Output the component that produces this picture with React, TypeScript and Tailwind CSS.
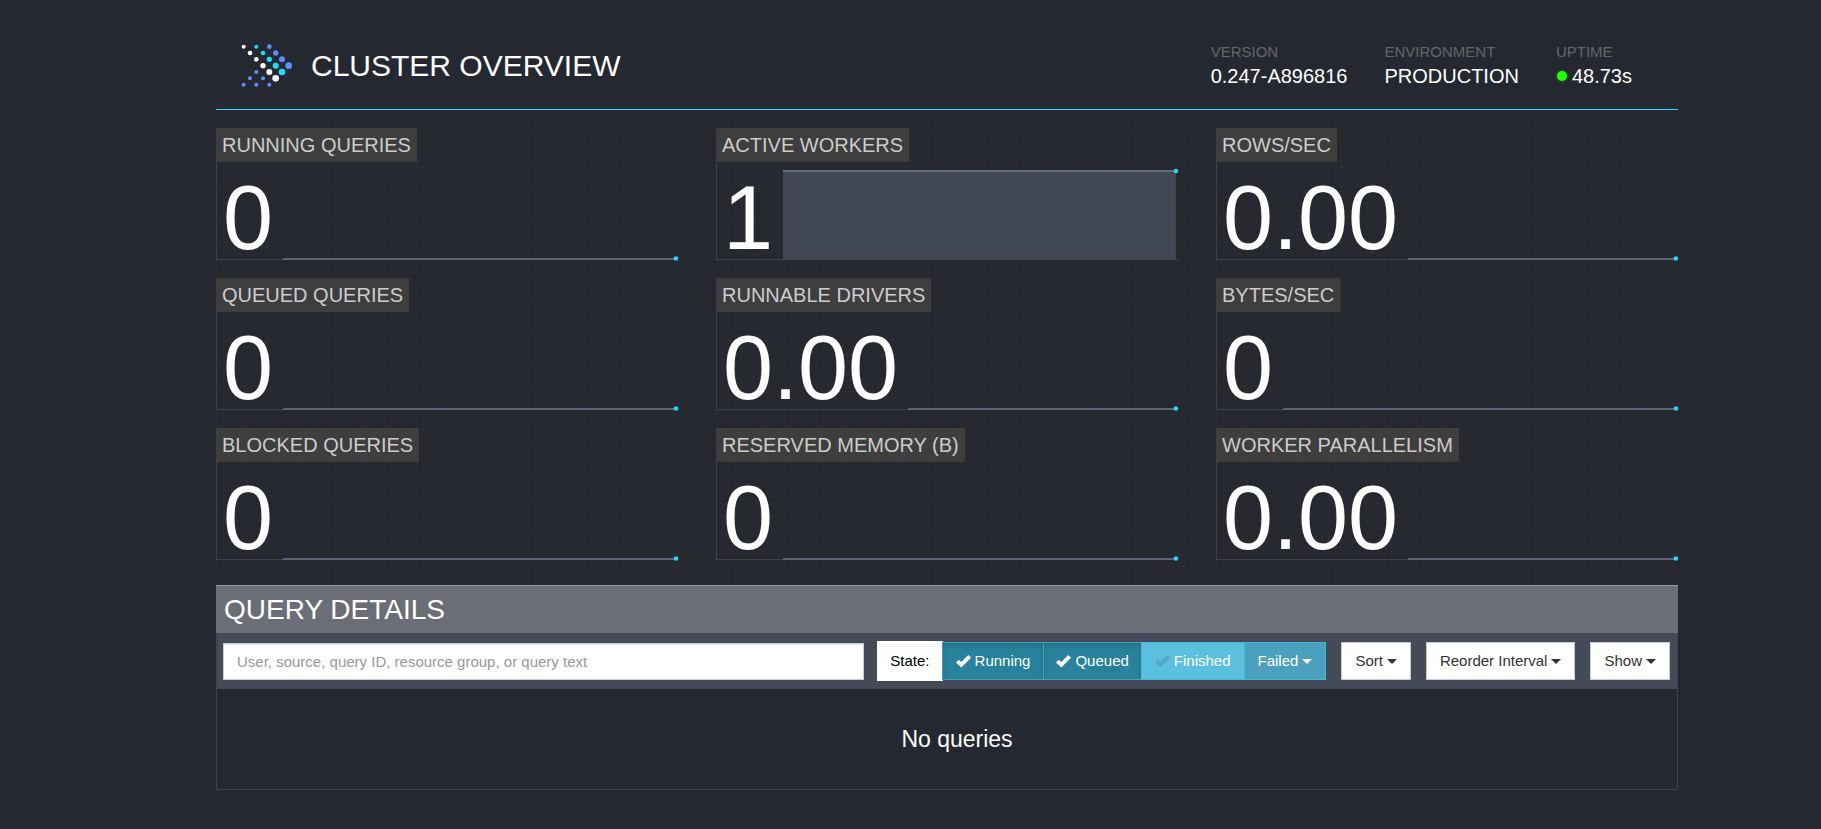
const WHITE = "#ffffff";
const CYAN = "#1edcff";
const BLUE = "#5c8eff";

// x, y, radius, colour
const logoDots: [number, number, number, string][] = [
  [102, 48, 6, WHITE],
  [140, 48, 6, CYAN],
  [179, 48, 7, BLUE],
  [121, 67, 7, WHITE],
  [160, 67, 7, CYAN],
  [198, 67, 8, BLUE],
  [140, 86, 7, WHITE],
  [179, 86, 8, CYAN],
  [217, 86, 9, BLUE],
  [160, 105, 8, WHITE],
  [198, 105, 9, CYAN],
  [237, 105, 10, BLUE],
  [140, 124, 6, BLUE],
  [179, 124, 9, WHITE],
  [217, 124, 10, CYAN],
  [121, 143, 6, BLUE],
  [160, 143, 6, BLUE],
  [198, 143, 10, WHITE],
  [102, 162, 6, BLUE],
  [140, 162, 6, BLUE],
  [179, 162, 6, BLUE],
];

const stats = [
  { label: "Running queries", value: "0" },
  { label: "Active workers", value: "1", full: true },
  { label: "Rows/sec", value: "0.00" },
  { label: "Queued queries", value: "0" },
  { label: "Runnable drivers", value: "0.00" },
  { label: "Bytes/sec", value: "0" },
  { label: "Blocked queries", value: "0" },
  { label: "Reserved Memory (B)", value: "0" },
  { label: "Worker Parallelism", value: "0.00" },
];

function Logo() {
  return (
    <svg className="h-11 w-[52px]" viewBox="94 40 156 132" role="img" aria-label="Logo">
      {logoDots.map(([x, y, r, fill]) => (
        <circle key={`${x}-${y}`} cx={x} cy={y} r={r} fill={fill} />
      ))}
    </svg>
  );
}

function Check({ className }: { className?: string }) {
  return (
    <svg className={`mr-1 h-[13px] w-[15px] fill-current ${className ?? ""}`} viewBox="0 0 15 13" aria-hidden="true">
      <path d="M0 7.6 2.7 4.8 5.3 7.1 12.3 0 15 2.8 5.3 12.6z" />
    </svg>
  );
}

function Caret() {
  return (
    <svg className="ml-1 h-[5px] w-[10px] fill-current" viewBox="0 0 10 5" aria-hidden="true">
      <path d="M0 0h10L5 5z" />
    </svg>
  );
}

function Sparkline({ full }: { full?: boolean }) {
  return (
    <svg className="mr-[2px] -mb-px ml-[10px] h-[98px] min-w-0 flex-1 overflow-visible" aria-hidden="true">
      {full ? (
        <>
          <rect x="0" y="9" width="100%" height="88" fill="#424754" />
          <line x1="0" x2="100%" y1="9" y2="9" stroke="#5f6b80" strokeWidth="2" />
          <circle cx="100%" cy="9" r="2.3" fill="#1edcff" />
        </>
      ) : (
        <>
          <line x1="0" x2="100%" y1="97" y2="97" stroke="#5b6375" strokeWidth="2" />
          <circle cx="100%" cy="96.5" r="2.3" fill="#1edcff" />
        </>
      )}
    </svg>
  );
}

function Stat({ label, value, full }: { label: string; value: string; full?: boolean }) {
  return (
    <div>
      <div className="flex">
        <h2 className="bg-[#3e3e3e] px-[6px] text-[20px] leading-[34px] text-[#cccccc] uppercase">{label}</h2>
      </div>
      <div className="flex border-b border-l border-[#424242]">
        <span className="pt-4 pb-px pl-[6px] text-[90px] leading-[80px] text-white">{value}</span>
        <Sparkline full={full} />
      </div>
    </div>
  );
}

function MenuButton({ children }: { children: string }) {
  return (
    <button
      type="button"
      aria-haspopup="menu"
      className="flex h-[38px] items-center border border-[#cccccc] bg-white px-[13px] text-[#333333]"
    >
      {children}
      <Caret />
    </button>
  );
}

export default function App() {
  return (
    <div className="min-h-screen bg-[#252830] pr-[143px] pb-10 pl-[216px] font-['Liberation_Sans',Arial,sans-serif] text-white">
      <header className="flex items-center justify-between border-b border-[#1edcff] pt-[42px] pb-[19px]">
        <div className="flex items-center pl-[25px]">
          <Logo />
          <h1 className="ml-[18px] text-[30px] leading-9 uppercase">Cluster Overview</h1>
        </div>
        <dl className="flex gap-[37px] pr-[46px]">
          <div>
            <dt className="text-[15px] leading-5 text-[#666666] uppercase">Version</dt>
            <dd className="text-[20px] leading-7">0.247-A896816</dd>
          </div>
          <div>
            <dt className="text-[15px] leading-5 text-[#666666] uppercase">Environment</dt>
            <dd className="text-[20px] leading-7 uppercase">Production</dd>
          </div>
          <div>
            <dt className="text-[15px] leading-5 text-[#666666] uppercase">Uptime</dt>
            <dd className="flex items-center text-[20px] leading-7">
              <span className="mr-[5px] ml-px h-[10px] w-[10px] rounded-full bg-[#1eff00] shadow-[0_0_3px_#1eff0080]" />
              48.73s
            </dd>
          </div>
        </dl>
      </header>

      <section className="mt-[6px] grid grid-cols-3 gap-x-[38px] gap-y-[18px] bg-[linear-gradient(#2d2d2d_1px,transparent_1px,transparent_6px,#2b2b2d_6px,#2b2b2d_7px,transparent_7px,transparent_12px,#2b2b2d_12px,#2b2b2d_13px,transparent_13px,transparent_19px,#2b2b2d_19px,#2b2b2d_20px,transparent_20px),linear-gradient(90deg,#2d2d2d_1px,transparent_1px,transparent_6px,#2b2b2d_6px,#2b2b2d_7px,transparent_7px,transparent_12px,#2b2b2d_12px,#2b2b2d_13px,transparent_13px,transparent_19px,#2b2b2d_19px,#2b2b2d_20px,transparent_20px)] bg-[size:25px_25px] pt-3 pb-[25px]">
        {stats.map((stat) => (
          <Stat key={stat.label} {...stat} />
        ))}
      </section>

      <section>
        <h2 className="border-t border-[#999ca3] bg-[#6b6e76] pl-2 text-[28px] leading-[47px] uppercase">
          Query Details
        </h2>
        <div className="border-x border-b border-[#424242]">
          <div className="flex items-center bg-[#454a58] py-2 pr-[7px] pl-[6px] text-[15px]">
            <input
              type="text"
              aria-label="Search queries"
              placeholder="User, source, query ID, resource group, or query text"
              className="mr-[13px] h-[37px] min-w-0 flex-1 border border-[#cccccc] bg-white px-[13px] text-[#555555] shadow-[inset_0_1px_1px_rgba(0,0,0,0.1)] placeholder:text-[#999999]"
            />
            <div className="flex items-center" role="group" aria-labelledby="state-label">
              <span id="state-label" className="flex h-10 items-center bg-white px-[13px] text-black">
                State:
              </span>
              <button
                type="button"
                aria-pressed="true"
                className="-ml-px flex h-[38px] items-center border border-[#46a0b8] bg-[#28829b] px-[13px] shadow-[inset_0_3px_5px_rgba(0,0,0,0.125)]"
              >
                <Check />
                Running
              </button>
              <button
                type="button"
                aria-pressed="true"
                className="-ml-px flex h-[38px] items-center border border-[#46a0b8] bg-[#28829b] px-3 shadow-[inset_0_3px_5px_rgba(0,0,0,0.125)]"
              >
                <Check />
                Queued
              </button>
              <button
                type="button"
                aria-pressed="false"
                className="-ml-px flex h-[38px] items-center border border-[#46b8da] bg-[#5bc0de] px-[13px]"
              >
                <Check className="text-[#51a9c6]" />
                Finished
              </button>
              <button
                type="button"
                aria-haspopup="menu"
                className="-ml-px flex h-[38px] items-center border border-[#46b8da] bg-[#4ba0bd] px-[13px]"
              >
                Failed
                <Caret />
              </button>
            </div>
            <div className="ml-[15px] flex gap-[15px]">
              <MenuButton>Sort</MenuButton>
              <MenuButton>Reorder Interval</MenuButton>
              <MenuButton>Show</MenuButton>
            </div>
          </div>
          <p className="py-9 pl-5 text-center text-[23px] leading-7">No queries</p>
        </div>
      </section>
    </div>
  );
}
